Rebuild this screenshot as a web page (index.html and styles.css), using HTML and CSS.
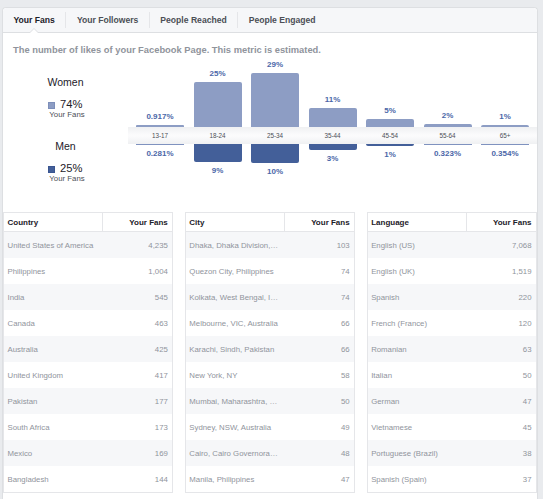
FILE: index.html
```html
<!DOCTYPE html>
<html>
<head>
<meta charset="utf-8">
<link rel="stylesheet" href="styles.css">
</head>
<body>
<div class="card">
  <div class="tabs">
    <div class="tab active">Your Fans</div>
    <div class="sep"></div>
    <div class="tab">Your Followers</div>
    <div class="sep"></div>
    <div class="tab">People Reached</div>
    <div class="sep"></div>
    <div class="tab">People Engaged</div>
  </div>
  <div class="subtitle">The number of likes of your Facebook Page. This metric is estimated.</div>

  <div class="chart-row">
    <div class="legend">
      <div class="lg-title lg-women">Women</div>
      <div class="lg-value"><span class="sq sq-w"></span>74%</div>
      <div class="lg-sub">Your Fans</div>
      <div class="lg-title lg-men">Men</div>
      <div class="lg-value"><span class="sq sq-m"></span>25%</div>
      <div class="lg-sub">Your Fans</div>
    </div>
    <div class="chart">
      <div class="col">
        <div class="top"><div class="pct">0.917%</div><div class="bar w thin" style="height:2px"></div></div>
        <div class="axis">13-17</div>
        <div class="bottom"><div class="bar m thin" style="height:1px"></div><div class="pct">0.281%</div></div>
      </div>
      <div class="col">
        <div class="top"><div class="pct">25%</div><div class="bar w" style="height:45px"></div></div>
        <div class="axis">18-24</div>
        <div class="bottom"><div class="bar m" style="height:18px"></div><div class="pct">9%</div></div>
      </div>
      <div class="col">
        <div class="top"><div class="pct">29%</div><div class="bar w" style="height:54px"></div></div>
        <div class="axis">25-34</div>
        <div class="bottom"><div class="bar m" style="height:19px"></div><div class="pct">10%</div></div>
      </div>
      <div class="col">
        <div class="top"><div class="pct">11%</div><div class="bar w" style="height:19px"></div></div>
        <div class="axis">35-44</div>
        <div class="bottom"><div class="bar m" style="height:6px"></div><div class="pct">3%</div></div>
      </div>
      <div class="col">
        <div class="top"><div class="pct">5%</div><div class="bar w" style="height:8px"></div></div>
        <div class="axis">45-54</div>
        <div class="bottom"><div class="bar m" style="height:2px"></div><div class="pct">1%</div></div>
      </div>
      <div class="col">
        <div class="top"><div class="pct">2%</div><div class="bar w" style="height:3px"></div></div>
        <div class="axis">55-64</div>
        <div class="bottom"><div class="bar m thin" style="height:1px"></div><div class="pct">0.323%</div></div>
      </div>
      <div class="col">
        <div class="top"><div class="pct">1%</div><div class="bar w" style="height:2px"></div></div>
        <div class="axis">65+</div>
        <div class="bottom"><div class="bar m thin" style="height:1px"></div><div class="pct">0.354%</div></div>
      </div>
    </div>
  </div>

  <div class="tables">
    <div class="tbl">
      <div class="th"><div class="c-name">Country</div><div class="c-num">Your Fans</div></div>
      <div class="tr"><div class="c-name">United States of America</div><div class="c-num">4,235</div></div>
      <div class="tr"><div class="c-name">Philippines</div><div class="c-num">1,004</div></div>
      <div class="tr"><div class="c-name">India</div><div class="c-num">545</div></div>
      <div class="tr"><div class="c-name">Canada</div><div class="c-num">463</div></div>
      <div class="tr"><div class="c-name">Australia</div><div class="c-num">425</div></div>
      <div class="tr"><div class="c-name">United Kingdom</div><div class="c-num">417</div></div>
      <div class="tr"><div class="c-name">Pakistan</div><div class="c-num">177</div></div>
      <div class="tr"><div class="c-name">South Africa</div><div class="c-num">173</div></div>
      <div class="tr"><div class="c-name">Mexico</div><div class="c-num">169</div></div>
      <div class="tr"><div class="c-name">Bangladesh</div><div class="c-num">144</div></div>
    </div>
    <div class="tbl">
      <div class="th"><div class="c-name">City</div><div class="c-num">Your Fans</div></div>
      <div class="tr"><div class="c-name">Dhaka, Dhaka Division,…</div><div class="c-num">103</div></div>
      <div class="tr"><div class="c-name">Quezon City, Philippines</div><div class="c-num">74</div></div>
      <div class="tr"><div class="c-name">Kolkata, West Bengal, I…</div><div class="c-num">74</div></div>
      <div class="tr"><div class="c-name">Melbourne, VIC, Australia</div><div class="c-num">66</div></div>
      <div class="tr"><div class="c-name">Karachi, Sindh, Pakistan</div><div class="c-num">66</div></div>
      <div class="tr"><div class="c-name">New York, NY</div><div class="c-num">58</div></div>
      <div class="tr"><div class="c-name">Mumbai, Maharashtra, …</div><div class="c-num">50</div></div>
      <div class="tr"><div class="c-name">Sydney, NSW, Australia</div><div class="c-num">49</div></div>
      <div class="tr"><div class="c-name">Cairo, Cairo Governora…</div><div class="c-num">48</div></div>
      <div class="tr"><div class="c-name">Manila, Philippines</div><div class="c-num">47</div></div>
    </div>
    <div class="tbl">
      <div class="th"><div class="c-name">Language</div><div class="c-num">Your Fans</div></div>
      <div class="tr"><div class="c-name">English (US)</div><div class="c-num">7,068</div></div>
      <div class="tr"><div class="c-name">English (UK)</div><div class="c-num">1,519</div></div>
      <div class="tr"><div class="c-name">Spanish</div><div class="c-num">220</div></div>
      <div class="tr"><div class="c-name">French (France)</div><div class="c-num">120</div></div>
      <div class="tr"><div class="c-name">Romanian</div><div class="c-num">63</div></div>
      <div class="tr"><div class="c-name">Italian</div><div class="c-num">50</div></div>
      <div class="tr"><div class="c-name">German</div><div class="c-num">47</div></div>
      <div class="tr"><div class="c-name">Vietnamese</div><div class="c-num">45</div></div>
      <div class="tr"><div class="c-name">Portuguese (Brazil)</div><div class="c-num">38</div></div>
      <div class="tr"><div class="c-name">Spanish (Spain)</div><div class="c-num">37</div></div>
    </div>
  </div>
</div>
</body>
</html>
```
FILE: styles.css
```css
* { box-sizing: border-box; }
html, body { margin: 0; padding: 0; }
body {
  background: #e9ebee;
  font-family: "Liberation Sans", Arial, Helvetica, sans-serif;
  width: 543px;
  height: 499px;
  overflow: hidden;
}
.card {
  margin: 7px 5px 0 2px;
  background: #fff;
  border: 1px solid #dddfe2;
  border-bottom: none;
  border-radius: 4px 4px 0 0;
  height: 492px;
  overflow: hidden;
}
.tabs {
  display: flex;
  align-items: center;
  height: 25px;
  background: #f6f7f9;
  border-bottom: 1px solid #dddfe2;
  border-radius: 4px 4px 0 0;
}
.tab {
  position: relative;
  font-size: 8.6px;
  font-weight: bold;
  color: #4b4f56;
  padding: 0 10.5px;
  line-height: 24px;
  height: 24px;
}
.tab.active { color: #1d2129; }
.tab.active::before,
.tab.active::after {
  content: "";
  position: absolute;
  left: 50%;
  width: 0;
  height: 0;
  border-left: 5px solid transparent;
  border-right: 5px solid transparent;
}
.tab.active::before {
  bottom: -1px;
  margin-left: -5px;
  border-bottom: 5px solid #dddfe2;
}
.tab.active::after {
  bottom: -1px;
  margin-left: -4px;
  border-left-width: 4px;
  border-right-width: 4px;
  border-bottom: 4px solid #fff;
}
.sep {
  width: 1px;
  height: 16px;
  background: #e5e6e9;
}
.subtitle {
  margin: 12px 0 0 10px;
  font-size: 9.35px;
  line-height: 11px;
  font-weight: bold;
  color: #90949c;
}
.chart-row {
  display: flex;
  margin-top: 1px;
}
.legend {
  width: 125px;
  display: flex;
  flex-direction: column;
  align-items: center;
  color: #1d2129;
}
.lg-title {
  font-size: 10.5px;
  line-height: 12px;
}
.lg-women { margin-top: 19px; }
.lg-men { margin-top: 21px; }
.lg-value {
  display: flex;
  align-items: center;
  font-size: 11.2px;
  line-height: 11px;
  margin-top: 11px;
  margin-left: -1px;
}
.sq {
  display: inline-block;
  width: 7px;
  height: 7px;
  margin-right: 5.5px;
  margin-top: 1px;
}
.sq-w { background: #8d9dc4; border: 1px solid #7d8fba; }
.sq-m { background: #435f99; border: 1px solid #3a5590; }
.lg-sub {
  font-size: 7.8px;
  line-height: 9px;
  color: #4b4f56;
  margin-left: 3px;
}
.chart {
  flex: 1;
  display: flex;
  gap: 9.5px;
  padding-left: 8px;
  background: linear-gradient(#eff0f2, #fbfbfc 45%, #fbfbfc 55%, #eff0f2) 0 70px / 100% 17px no-repeat;
}
.col {
  width: 48px;
  display: flex;
  flex-direction: column;
}
.top {
  height: 70px;
  display: flex;
  flex-direction: column;
  justify-content: flex-end;
}
.axis {
  height: 17px;
  line-height: 17px;
  text-align: center;
  font-size: 6.3px;
  color: #4b4f56;
}
.bottom {
  height: 45px;
  display: flex;
  flex-direction: column;
}
.pct {
  text-align: center;
  font-size: 8px;
  line-height: 9px;
  font-weight: bold;
  color: #4b67a8;
}
.top .pct { margin-bottom: 4px; }
.bottom .pct { margin-top: 3.5px; }
.bar.w {
  background: #8d9dc4;
  border-radius: 2px 2px 0 0;
}
.bar.m {
  background: #435f99;
  border-radius: 0 0 2px 2px;
}
.bar.w.thin { background: #8d9dc4; border-radius: 1px 1px 0 0; }
.bar.m.thin { background: #7f92bf; border-radius: 0; }

.tables {
  display: grid;
  grid-template-columns: 1fr 1fr 1fr;
  gap: 11.5px;
  margin-top: 23px;
}
.tbl {
  border: 1px solid #e5e6e9;
}
.th, .tr {
  display: flex;
}
.th {
  height: 19px;
  border-bottom: 1px solid #e5e6e9;
  font-size: 8px;
  font-weight: bold;
  color: #1d2129;
}
.th .c-name {
  border-right: 1px solid #e5e6e9;
}
.c-name {
  width: 99px;
  padding-left: 3.5px;
  white-space: nowrap;
  overflow: hidden;
  display: flex;
  align-items: center;
}
.c-num {
  flex: 1;
  padding-right: 4.5px;
  display: flex;
  align-items: center;
  justify-content: flex-end;
}
.tr {
  height: 26px;
  font-size: 7.8px;
  color: #90949c;
}
.tr:nth-child(even) { background: #f6f7f9; }
```
